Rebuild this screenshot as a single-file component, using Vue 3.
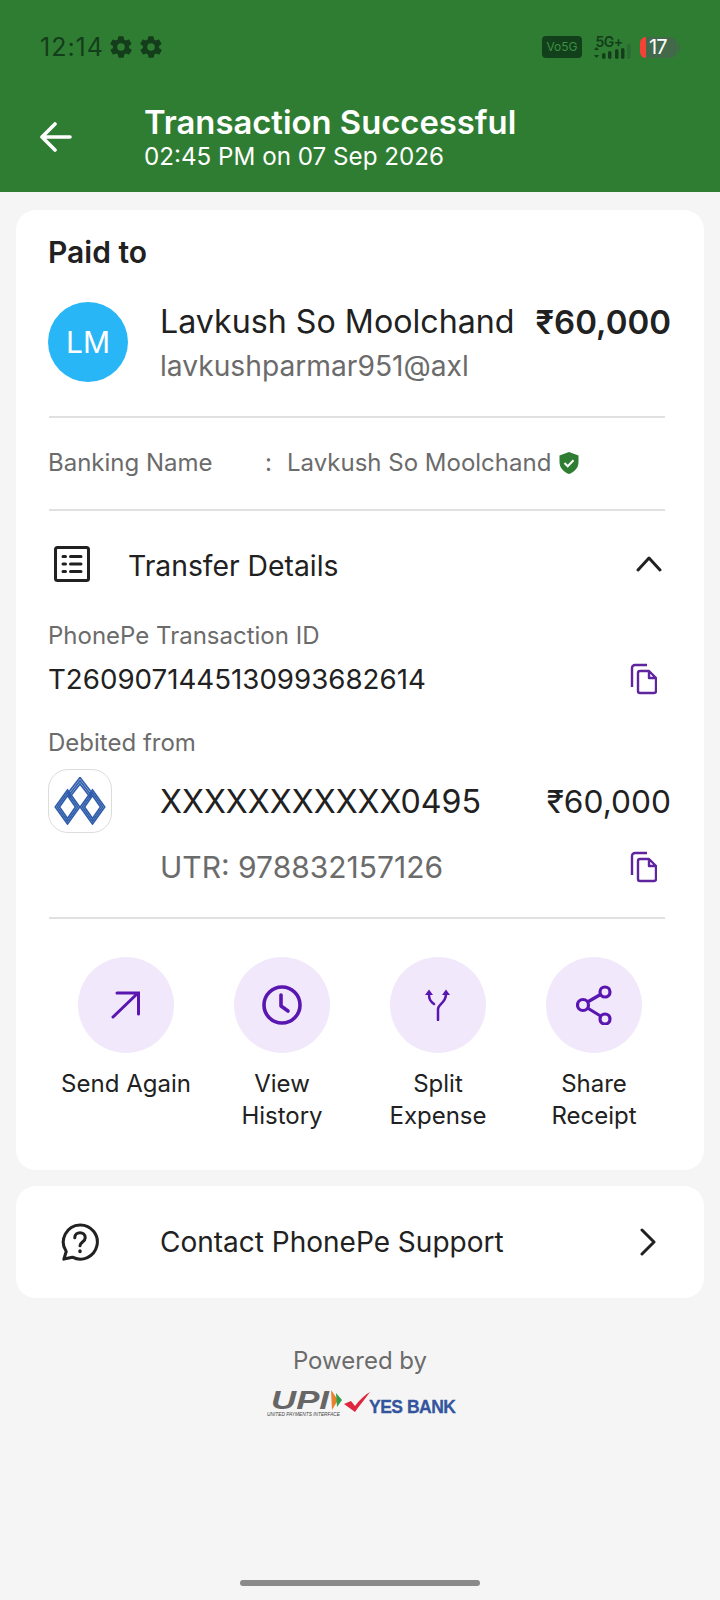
<script setup>
const actions = [
  { id: 'send', lines: ['Send Again'] },
  { id: 'history', lines: ['View', 'History'] },
  { id: 'split', lines: ['Split', 'Expense'] },
  { id: 'share', lines: ['Share', 'Receipt'] }
]
const gearPath = 'M19.4 13a7.6 7.6 0 0 0 0-2l2.1-1.6a.5.5 0 0 0 .1-.6l-2-3.5a.5.5 0 0 0-.6-.2l-2.5 1a7.3 7.3 0 0 0-1.7-1l-.4-2.6a.5.5 0 0 0-.5-.4h-4a.5.5 0 0 0-.5.4l-.4 2.6a7.3 7.3 0 0 0-1.7 1l-2.5-1a.5.5 0 0 0-.6.2l-2 3.5a.5.5 0 0 0 .1.6L4.6 11a7.6 7.6 0 0 0 0 2l-2.1 1.6a.5.5 0 0 0-.1.6l2 3.5a.5.5 0 0 0 .6.2l2.5-1a7.3 7.3 0 0 0 1.7 1l.4 2.6a.5.5 0 0 0 .5.4h4a.5.5 0 0 0 .5-.4l.4-2.6a7.3 7.3 0 0 0 1.7-1l2.5 1a.5.5 0 0 0 .6-.2l2-3.5a.5.5 0 0 0-.1-.6zM12 15.5a3.5 3.5 0 1 1 0-7 3.5 3.5 0 0 1 0 7z'
const copyOuter = 'M3 24V5a3 3 0 0 1 3-3h12'
const copyInner = 'M9 10a2 2 0 0 1 2-2h9l7 7v13a2 2 0 0 1-2 2H11a2 2 0 0 1-2-2zM20 8v7h7'
// stripes of the bank mark, outermost first
const rings = [
  { w: 12.2, h: 17 },
  { w: 10.1, h: 14.2 },
  { w: 8, h: 11.4 }
]
function diamond(cx, r) {
  const cy = 30
  return `M${cx} ${cy - r.h}L${cx + r.w} ${cy}L${cx} ${cy + r.h}L${cx - r.w} ${cy}Z`
}
function roof(i) {
  const top = 0.5 + i * 3.2
  const side = 12.5 - i * 0.8
  return `M${26 - side} ${top + side * 1.3}L26 ${top}L${26 + side} ${top + side * 1.3}`
}
</script>

<template>
  <div class="page">
    <header class="header">
      <div class="status">
        <span class="time">12:14</span>
        <svg class="gear" viewBox="0 0 24 24"><path :d="gearPath" /></svg>
        <svg class="gear" viewBox="0 0 24 24"><path :d="gearPath" /></svg>
        <span class="spring"></span>
        <span class="vo">Vo5G</span>
        <div class="net">
          <span class="net-label">5G+</span>
          <svg class="bars" width="38" height="15" viewBox="0 0 38 15">
            <path d="M2.500 3 5 6H0zM2.500 14 0 11h5z" fill="#143d1b" />
            <rect x="8" y="9" width="3.500" height="6" rx="1.700" fill="#143d1b" />
            <rect x="14" y="7" width="3.500" height="8" rx="1.700" fill="#143d1b" />
            <rect x="21" y="5" width="3.500" height="10" rx="1.700" fill="#143d1b" />
            <rect x="27" y="4" width="3.500" height="11" rx="1.700" fill="#143d1b" />
            <rect x="33" y="0" width="3.500" height="15" rx="1.700" fill="#2a6a33" />
          </svg>
        </div>
        <div class="battery">
          <span class="battery-low"></span>
          <span class="battery-num">17</span>
        </div>
        <span class="battery-nub"></span>
      </div>
      <div class="title-row">
        <svg class="back" width="32" height="30" viewBox="0 0 32 30" fill="none" stroke="#fff" stroke-width="3.600" stroke-linecap="round" stroke-linejoin="round">
          <path d="M30 15H2M15 2 2 15l13 13" />
        </svg>
        <div class="titles">
          <div class="title">Transaction Successful</div>
          <div class="subtitle">02:45 PM on 07 Sep 2026</div>
        </div>
      </div>
    </header>

    <section class="card main">
      <div class="paid">Paid to</div>

      <div class="payee">
        <div class="avatar">LM</div>
        <div class="payee-text">
          <div class="payee-top">
            <span class="payee-name">Lavkush So Moolchand</span>
            <span class="amount">₹60,000</span>
          </div>
          <div class="upi">lavkushparmar951@axl</div>
        </div>
      </div>

      <div class="rule"></div>

      <div class="banking">
        <span class="banking-label">Banking Name</span>
        <span class="colon">:</span>
        <span>Lavkush So Moolchand</span>
        <svg class="shield" width="20" height="22" viewBox="0 0 20 22">
          <path d="M10 0 19.500 3.500V10c0 5.500-3.800 10-9.500 12C4.300 20 .5 15.500.5 10V3.500z" fill="#2e7d32" />
          <path d="m5.500 11 3.200 3.200 5.800-6" fill="none" stroke="#fff" stroke-width="2" />
        </svg>
      </div>

      <div class="rule"></div>

      <div class="details-head">
        <svg class="list-icon" width="36" height="36" viewBox="0 0 36 36" fill="none" stroke="#212121" stroke-linecap="round">
          <rect x="1.500" y="1.500" width="33" height="33" rx="2" stroke-width="3" />
          <path d="M9 10.500h2.500M9 18h2.500M9 25.500h2.500M16.500 10.500H27M16.500 18H27M16.500 25.500H27" stroke-width="3" />
        </svg>
        <span class="details-title">Transfer Details</span>
        <svg class="chevron-up" width="26" height="16" viewBox="0 0 26 16" fill="none" stroke="#212121" stroke-width="3" stroke-linecap="round" stroke-linejoin="round">
          <path d="M2 14 13 2l11 12" />
        </svg>
      </div>

      <div class="label">PhonePe Transaction ID</div>
      <div class="txn">
        <span>T2609071445130993682614</span>
        <svg class="copy" width="28" height="32" viewBox="0 0 28 32" fill="none" stroke="#5f259f" stroke-width="2.400" stroke-linejoin="round">
          <path :d="copyOuter" />
          <path :d="copyInner" />
        </svg>
      </div>

      <div class="label debited">Debited from</div>
      <div class="account">
        <div class="bank-logo">
          <svg width="52" height="48" viewBox="0 0 52 48" fill="none" stroke="#2f5dab" stroke-width="1.700">
            <path v-for="i in [0, 1, 2]" :key="i" :d="roof(i)" />
            <path v-for="r in rings" :key="'l' + r.w" :d="diamond(13.5, r)" />
            <path v-for="r in rings" :key="'r' + r.w" :d="diamond(38.5, r)" />
          </svg>
        </div>
        <span class="acc-num">XXXXXXXXXXX0495</span>
        <span class="acc-amount">₹60,000</span>
      </div>
      <div class="utr">
        <span>UTR: 978832157126</span>
        <svg class="copy" width="28" height="32" viewBox="0 0 28 32" fill="none" stroke="#5f259f" stroke-width="2.400" stroke-linejoin="round">
          <path :d="copyOuter" />
          <path :d="copyInner" />
        </svg>
      </div>

      <div class="rule last"></div>

      <div class="actions">
        <div v-for="a in actions" :key="a.id" class="action">
          <div class="circle">
            <svg v-if="a.id === 'send'" width="30" height="28" viewBox="0 0 30 28" fill="none" stroke="#5a16b0" stroke-width="3" stroke-linecap="round">
              <path d="M2 26 27 2M6 2h21.500v21" />
            </svg>
            <svg v-else-if="a.id === 'history'" width="40" height="40" viewBox="0 0 40 40" fill="none" stroke="#5a16b0" stroke-width="3.600" stroke-linecap="round" stroke-linejoin="round">
              <circle cx="20" cy="20" r="18" />
              <path d="M19 10v11l7 5" />
            </svg>
            <svg v-else-if="a.id === 'split'" width="28" height="32" viewBox="0 0 28 32" fill="none" stroke="#5a16b0" stroke-width="2.500" stroke-linecap="round">
              <path d="M14 31V20c0-5 8-6 8-15M10 15C6 12 5 10 5 5" />
              <path d="M1 6 5 .5 9 6zM18 6l4-5.500L26 6z" fill="#5a16b0" stroke="none" />
            </svg>
            <svg v-else width="36" height="40" viewBox="0 0 36 40" fill="none" stroke="#5a16b0" stroke-width="3.200">
              <circle cx="29" cy="7" r="5" />
              <circle cx="7" cy="20" r="5.500" />
              <circle cx="29" cy="34" r="5" />
              <path d="m11.500 17 13-7.500M11.500 23l13 8" />
            </svg>
          </div>
          <div class="action-label">
            <div v-for="l in a.lines" :key="l">{{ l }}</div>
          </div>
        </div>
      </div>
    </section>

    <section class="card support">
      <svg class="help" width="38" height="38" viewBox="0 0 40 40" fill="none" stroke="#212121" stroke-width="3.200" stroke-linecap="round" stroke-linejoin="round">
        <path d="M20 2a18 18 0 1 1-8 34l-9 2 2.500-8A18 18 0 0 1 20 2z" />
        <path d="M14.500 15.500c0-7 11-7 11 0 0 4.500-5.500 4.500-5.500 8.500" />
        <path d="M20 29.500v.5" stroke-width="3.600" />
      </svg>
      <span class="support-text">Contact PhonePe Support</span>
      <svg class="chevron-right" width="16" height="28" viewBox="0 0 16 28" fill="none" stroke="#212121" stroke-width="3" stroke-linecap="round" stroke-linejoin="round">
        <path d="m2 2 12 12L2 26" />
      </svg>
    </section>

    <div class="powered">Powered by</div>
    <div class="brands">
      <div class="upi-logo">
        <svg class="upi-mark" width="72" height="22" viewBox="0 0 72 22">
          <text class="upi-word" x="0" y="20" textLength="58" lengthAdjust="spacingAndGlyphs">UPI</text>
          <path d="M60 1 67 11 61 21z" fill="#e8812c" />
          <path d="M65 4 71 11 66 18z" fill="#2f9e4b" />
        </svg>
        <span class="upi-small">UNITED PAYMENTS INTERFACE</span>
      </div>
      <svg class="tick" width="28" height="22" viewBox="0 0 28 22">
        <path d="M0 12 7 9 11 14C15 8 21 3 26 0 21 7 15 14 11 20z" fill="#e0263f" />
      </svg>
      <span class="yes">YES BANK</span>
    </div>

    <div class="home"></div>
  </div>
</template>

<style scoped>
.page {
  width: 720px;
  min-height: 1600px;
  background: #f5f5f5;
  display: flex;
  flex-direction: column;
  font-family: Inter, "Noto Sans", sans-serif;
  color: #212121;
}

/* header */
.header {
  background: #2e7d32;
  height: 192px;
  box-sizing: border-box;
  padding: 30px 0 0 40px;
}
.status {
  display: flex;
  align-items: center;
  height: 34px;
  padding-right: 40px;
  color: #143d1b;
}
.time {
  font-size: 25px;
  letter-spacing: 1px;
  width: 67.5px;
  white-space: nowrap;
}
.gear {
  width: 26px;
  height: 26px;
  fill: #143d1b;
  margin-right: 4px;
}
.spring {
  flex: 1;
}
.vo {
  width: 40px;
  height: 22px;
  background: #12401a;
  border-radius: 4px;
  color: #3d8f45;
  font-size: 12px;
  line-height: 22px;
  text-align: center;
  margin-right: 12px;
}
.net {
  width: 38px;
  margin-right: 8px;
  display: flex;
  flex-direction: column;
  align-items: center;
}
.net-label {
  font-size: 14px;
  line-height: 11px;
  font-weight: 600;
  margin-right: 8px;
  letter-spacing: -0.5px;
}
.bars {
  display: block;
  margin-top: -3px;
}
.battery {
  width: 37px;
  height: 21px;
  background: #41694a;
  border-radius: 7px;
  display: flex;
  color: #fff;
}
.battery-low {
  width: 6px;
  background: #f44336;
  border-radius: 7px 0 0 7px;
}
.battery-num {
  font-size: 20px;
  line-height: 21px;
  margin-left: 3px;
  letter-spacing: -1px;
}
.battery-nub {
  width: 2px;
  height: 9px;
  margin-left: 1px;
  background: #41694a;
}
.title-row {
  display: flex;
  align-items: center;
  margin-top: 38px;
}
.back {
  margin-top: 1px;
}
.titles {
  margin-left: 72px;
}
.title {
  color: #fff;
  font-size: 32.800px;
  font-weight: 600;
  line-height: 40px;
}
.subtitle {
  color: #fff;
  font-size: 24.200px;
  line-height: 29px;
}

/* cards */
.card {
  background: #fff;
  border-radius: 20px;
  margin: 0 16px;
}
.main {
  margin-top: 18px;
  padding: 22px 32px 38px;
}
.paid {
  font-size: 30px;
  font-weight: 600;
  line-height: 40px;
}
.payee {
  display: flex;
  align-items: flex-start;
  margin-top: 30px;
}
.avatar {
  width: 80px;
  height: 80px;
  flex: none;
  border-radius: 50%;
  background: #29b6f6;
  color: #fff;
  font-size: 30px;
  line-height: 80px;
  text-align: center;
}
.payee-text {
  flex: 1;
  margin-left: 32px;
}
.payee-top {
  display: flex;
  justify-content: space-between;
  align-items: center;
  margin-right: 1px;
  line-height: 40px;
}
.payee-name {
  font-size: 32.200px;
}
.amount {
  font-size: 33px;
  font-weight: 600;
}
.upi {
  font-size: 28.200px;
  line-height: 38px;
  margin-top: 5px;
  color: #6b6b6b;
}
.rule {
  height: 2px;
  background: #e0e0e0;
  margin: 31px 7px 0 1px;
}
.banking {
  display: flex;
  align-items: center;
  height: 91px;
  box-sizing: border-box;
  padding-bottom: 2px;
  font-size: 24px;
  color: #6b6b6b;
}
.banking + .rule {
  margin-top: 0;
}
.banking-label {
  width: 217px;
}
.colon {
  width: 22px;
}
.shield {
  margin-left: 8px;
}
.details-head {
  display: flex;
  align-items: center;
  height: 108px;
  box-sizing: border-box;
  padding-bottom: 2px;
}
.list-icon {
  margin-left: 6px;
}
.details-title {
  font-size: 28.300px;
  margin: 4px 0 0 38px;
  flex: 1;
}
.chevron-up {
  margin-right: 10px;
}
.label {
  font-size: 24px;
  line-height: 34px;
  color: #6b6b6b;
}
.debited {
  margin-top: 19px;
}
.txn {
  display: flex;
  justify-content: space-between;
  align-items: center;
  height: 54px;
  box-sizing: border-box;
  padding-bottom: 2px;
  font-size: 27.700px;
}
.copy {
  margin-right: 15px;
}
.account {
  display: flex;
  align-items: center;
  margin-top: 9px;
  height: 64px;
}
.bank-logo {
  width: 64px;
  height: 64px;
  box-sizing: border-box;
  flex: none;
  border: 1px solid #dcdcdc;
  border-radius: 20px;
  display: flex;
  align-items: center;
  justify-content: center;
}
.acc-num {
  flex: 1;
  margin-left: 48px;
  font-size: 32.200px;
}
.acc-amount {
  font-size: 31.700px;
  margin-right: 1px;
}
.utr {
  display: flex;
  justify-content: space-between;
  align-items: center;
  height: 54px;
  margin: 7px 0 0 112px;
  font-size: 30px;
  color: #6b6b6b;
}
.rule.last {
  margin-top: 23px;
}

/* round buttons */
.actions {
  display: grid;
  grid-template-columns: repeat(4, 1fr);
  margin-top: 38px;
}
.action {
  display: flex;
  flex-direction: column;
  align-items: center;
}
.circle {
  width: 96px;
  height: 96px;
  border-radius: 50%;
  background: #f1e8fb;
  display: flex;
  align-items: center;
  justify-content: center;
}
.action-label {
  margin-top: 15px;
  font-size: 24px;
  line-height: 32px;
  text-align: center;
  white-space: nowrap;
}

/* support */
.support {
  margin-top: 16px;
  height: 112px;
  display: flex;
  align-items: center;
  padding: 0 48px 0 45px;
}
.support-text {
  flex: 1;
  margin-left: 61px;
  font-size: 28px;
}

/* footer */
.powered {
  margin-top: 46px;
  text-align: center;
  font-size: 24px;
  line-height: 34px;
  color: #6b6b6b;
}
.brands {
  margin-top: 11px;
  height: 32px;
  display: flex;
  align-items: flex-start;
  padding-left: 271px;
}
.upi-logo {
  width: 72px;
  height: 32px;
}
.upi-mark {
  display: block;
  overflow: visible;
}
.upi-word {
  font-family: "Liberation Sans", sans-serif;
  font-style: italic;
  font-weight: 700;
  font-size: 26px;
  fill: #666;
}
.upi-small {
  display: block;
  margin: 1px 0 0 -4px;
  font-family: "Liberation Sans", sans-serif;
  font-style: italic;
  font-size: 4.800px;
  line-height: 6px;
  white-space: nowrap;
  color: #444;
}
.tick {
  margin: 3px 0 0 1px;
}
.yes {
  font-family: "Liberation Sans", sans-serif;
  font-weight: 700;
  font-size: 17.500px;
  line-height: 20px;
  letter-spacing: -0.5px;
  color: #34549e;
  -webkit-text-stroke: 0.3px #34549e;
  margin: 8px 0 0 -3px;
  white-space: nowrap;
}
.home {
  width: 240px;
  height: 6px;
  border-radius: 3px;
  background: #8a8a8a;
  margin: auto auto 14px;
}
</style>
